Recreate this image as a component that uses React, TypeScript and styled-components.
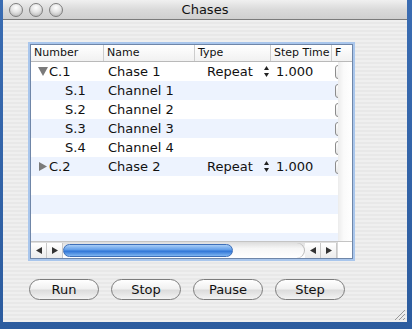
import React from "react";
import styled, { createGlobalStyle } from "styled-components";

const GlobalStyle = createGlobalStyle`
  html, body {
    margin: 0;
    padding: 0;
    background: #3767ab;
  }
  body {
    width: 412px;
    height: 329px;
    overflow: hidden;
    font-family: "DejaVu Sans", "Liberation Sans", sans-serif;
  }
`;

type Row = {
  number: string;
  name: string;
  kind?: "open" | "closed";
  type?: string;
  step?: string;
};

const rows: Row[] = [
  { number: "C.1", name: "Chase 1", kind: "open", type: "Repeat", step: "1.000" },
  { number: "S.1", name: "Channel 1" },
  { number: "S.2", name: "Channel 2" },
  { number: "S.3", name: "Channel 3" },
  { number: "S.4", name: "Channel 4" },
  { number: "C.2", name: "Chase 2", kind: "closed", type: "Repeat", step: "1.000" },
  { number: "", name: "" },
  { number: "", name: "" },
  { number: "", name: "" },
  { number: "", name: "" },
];

const COLS = "73px 91px 76px 61px 6px";

const Desktop = styled.div`
  height: 329px;
  padding-left: 3px;
  background: linear-gradient(#3a6cb2, #2c5c9f);
`;

const Window = styled.div`
  width: 404px;
  height: 322px;
  display: flex;
  flex-direction: column;
  background: repeating-linear-gradient(
    to bottom,
    #efefef 0px,
    #efefef 2px,
    #e8e8e8 2px,
    #e8e8e8 4px
  );
  position: relative;
`;

const TitleBar = styled.div`
  height: 19px;
  border-bottom: 1px solid #7b7b7b;
  background: linear-gradient(#f0f0f0, #dadada 50%, #cfcfcf);
  display: flex;
  align-items: center;
  position: relative;
`;

const Lights = styled.div`
  display: flex;
  gap: 6px;
  padding-left: 6px;
`;

const Light = styled.div`
  width: 12px;
  height: 12px;
  border-radius: 50%;
  border: 1px solid #7e7e7e;
  background: radial-gradient(circle at 50% 30%, #ffffff 0%, #e4e4e4 45%, #ababab 100%);
`;

const Title = styled.div`
  position: absolute;
  left: 0;
  right: 0;
  text-align: center;
  font-size: 13px;
  color: #111;
  pointer-events: none;
`;

const Content = styled.div`
  flex: 1;
  display: flex;
  flex-direction: column;
  padding: 24px 0 0 27px;
`;

const TableFrame = styled.div`
  width: 321px;
  height: 213px;
  border: 1px solid #6f86a8;
  box-shadow: 0 0 0 2px #a9c6ec;
  display: flex;
  flex-direction: column;
  background: #fff;
  overflow: hidden;
`;

const Header = styled.div`
  height: 16px;
  border-bottom: 1px solid #b9b9b9;
  background: linear-gradient(#ffffff, #f1f1f1);
  display: grid;
  grid-template-columns: 73px 91px 76px 61px 20px;
  font-size: 11px;
  color: #111;
`;

const HeadCell = styled.div<{ $last?: boolean }>`
  line-height: 16px;
  padding-left: 3px;
  border-right: ${(p) => (p.$last ? "none" : "1px solid #cdcdcd")};
  white-space: nowrap;
  overflow: hidden;
`;

const Body = styled.div`
  flex: 1;
  display: flex;
  overflow: hidden;
`;

const RowList = styled.div`
  width: 307px;
  overflow: hidden;
`;

const Strip = styled.div`
  width: 14px;
  background: linear-gradient(to right, #ececec, #fafafa 40%, #ffffff);
`;

const TableRow = styled.div<{ $odd: boolean }>`
  height: 19px;
  display: grid;
  grid-template-columns: ${COLS};
  background: ${(p) => (p.$odd ? "#edf3fe" : "#ffffff")};
  font-size: 13px;
  line-height: 19px;
  color: #111;
`;

const NumberCell = styled.div<{ $child: boolean }>`
  display: flex;
  align-items: center;
  padding-left: ${(p) => (p.$child ? "34px" : "7px")};
  white-space: nowrap;
`;

const Disclosure = styled.svg`
  width: 11px;
  height: 9px;
  flex-shrink: 0;
`;

const NameCell = styled.div`
  padding-left: 4px;
  white-space: nowrap;
`;

const TypeCell = styled.div`
  display: flex;
  align-items: center;
  justify-content: space-between;
  padding: 0 2px 0 12px;
`;

const StepCell = styled.div`
  padding-left: 5px;
`;

const CheckCell = styled.div`
  overflow: hidden;
  display: flex;
  align-items: center;
  padding-left: 3px;
`;

const Check = styled.div`
  width: 11px;
  height: 12px;
  flex-shrink: 0;
  border: 1px solid #8c8c8c;
  border-radius: 3px;
  background: linear-gradient(#ffffff, #e6e6e6);
`;

const Bottom = styled.div`
  height: 16px;
  display: flex;
  border-top: 1px solid #c4c4c4;
`;

const HScroll = styled.div`
  width: 307px;
  display: flex;
  align-items: center;
  background: linear-gradient(#dcdcdc, #f6f6f6 40%, #ffffff);
`;

const ArrowBtn = styled.div`
  width: 15px;
  height: 15px;
  display: flex;
  align-items: center;
  justify-content: center;
  border-right: 1px solid #c8c8c8;
  background: linear-gradient(#ffffff, #ececec);
  flex-shrink: 0;
`;

const Track = styled.div`
  flex: 1;
  height: 15px;
  display: flex;
  align-items: center;
  padding-right: 2px;
  border-radius: 0 8px 8px 0;
  box-shadow: inset -1px 0 0 #bcbcbc;
`;

const Thumb = styled.div`
  width: 170px;
  height: 13px;
  border-radius: 7px;
  border: 1px solid #3e6fb8;
  box-sizing: border-box;
  background: linear-gradient(#a7cdf7, #5f9ce8 45%, #2f74d6 55%, #7fb6f2);
`;

const Corner = styled.div`
  width: 14px;
  background: #fff;
  border-left: 1px solid #d8d8d8;
`;

const Buttons = styled.div`
  display: flex;
  gap: 12px;
  margin: 20px 0 0 -1px;
`;

const PillButton = styled.button`
  width: 70px;
  height: 21px;
  border-radius: 11px;
  border: 1px solid #7c7c7c;
  background: linear-gradient(#ffffff, #f1f1f1 45%, #dcdcdc 55%, #f3f3f3);
  font-family: "DejaVu Sans", "Liberation Sans", sans-serif;
  font-size: 13px;
  color: #111;
  padding: 0;
  line-height: 19px;
`;

const Grip = styled.svg`
  position: absolute;
  right: 2px;
  bottom: 2px;
  width: 11px;
  height: 11px;
`;

const Arrow = ({ dir }: { dir: "left" | "right" }) => (
  <svg width="6" height="7" viewBox="0 0 6 7">
    {dir === "left" ? (
      <polygon points="6,0 6,7 0,3.5" fill="#333" />
    ) : (
      <polygon points="0,0 0,7 6,3.5" fill="#333" />
    )}
  </svg>
);

const Stepper = () => (
  <svg width="5" height="11" viewBox="0 0 5 11">
    <polygon points="2.5,0 5,4 0,4" fill="#222" />
    <polygon points="0,7 5,7 2.5,11" fill="#222" />
  </svg>
);

const App = () => {
  return (
    <>
      <GlobalStyle />
      <Desktop>
        <Window>
          <TitleBar>
            <Lights>
              <Light />
              <Light />
              <Light />
            </Lights>
            <Title>Chases</Title>
          </TitleBar>
          <Content>
            <TableFrame>
              <Header>
                <HeadCell>Number</HeadCell>
                <HeadCell>Name</HeadCell>
                <HeadCell>Type</HeadCell>
                <HeadCell>Step Time</HeadCell>
                <HeadCell $last>F</HeadCell>
              </Header>
              <Body>
                <RowList>
                  {rows.map((row, i) => (
                    <TableRow key={i} $odd={i % 2 === 1}>
                      <NumberCell $child={!row.kind}>
                        {row.kind && (
                          <Disclosure viewBox="0 0 11 9">
                            {row.kind === "open" ? (
                              <polygon points="0,0 10,0 5,9" fill="#7a7a7a" />
                            ) : (
                              <polygon points="1,0 1,9 9,4.5" fill="#7a7a7a" />
                            )}
                          </Disclosure>
                        )}
                        {row.number}
                      </NumberCell>
                      <NameCell>{row.name}</NameCell>
                      <TypeCell>
                        {row.type && (
                          <>
                            <span>{row.type}</span>
                            <Stepper />
                          </>
                        )}
                      </TypeCell>
                      <StepCell>{row.step}</StepCell>
                      <CheckCell>{i < 6 && <Check />}</CheckCell>
                    </TableRow>
                  ))}
                </RowList>
                <Strip />
              </Body>
              <Bottom>
                <HScroll>
                  <ArrowBtn>
                    <Arrow dir="left" />
                  </ArrowBtn>
                  <ArrowBtn>
                    <Arrow dir="right" />
                  </ArrowBtn>
                  <Track>
                    <Thumb />
                  </Track>
                  <ArrowBtn>
                    <Arrow dir="left" />
                  </ArrowBtn>
                  <ArrowBtn>
                    <Arrow dir="right" />
                  </ArrowBtn>
                </HScroll>
                <Corner />
              </Bottom>
            </TableFrame>
            <Buttons>
              <PillButton>Run</PillButton>
              <PillButton>Stop</PillButton>
              <PillButton>Pause</PillButton>
              <PillButton>Step</PillButton>
            </Buttons>
          </Content>
          <Grip viewBox="0 0 11 11">
            <line x1="11" y1="1" x2="1" y2="11" stroke="#999" />
            <line x1="11" y1="5" x2="5" y2="11" stroke="#999" />
            <line x1="11" y1="9" x2="9" y2="11" stroke="#999" />
          </Grip>
        </Window>
      </Desktop>
    </>
  );
};

export default App;
